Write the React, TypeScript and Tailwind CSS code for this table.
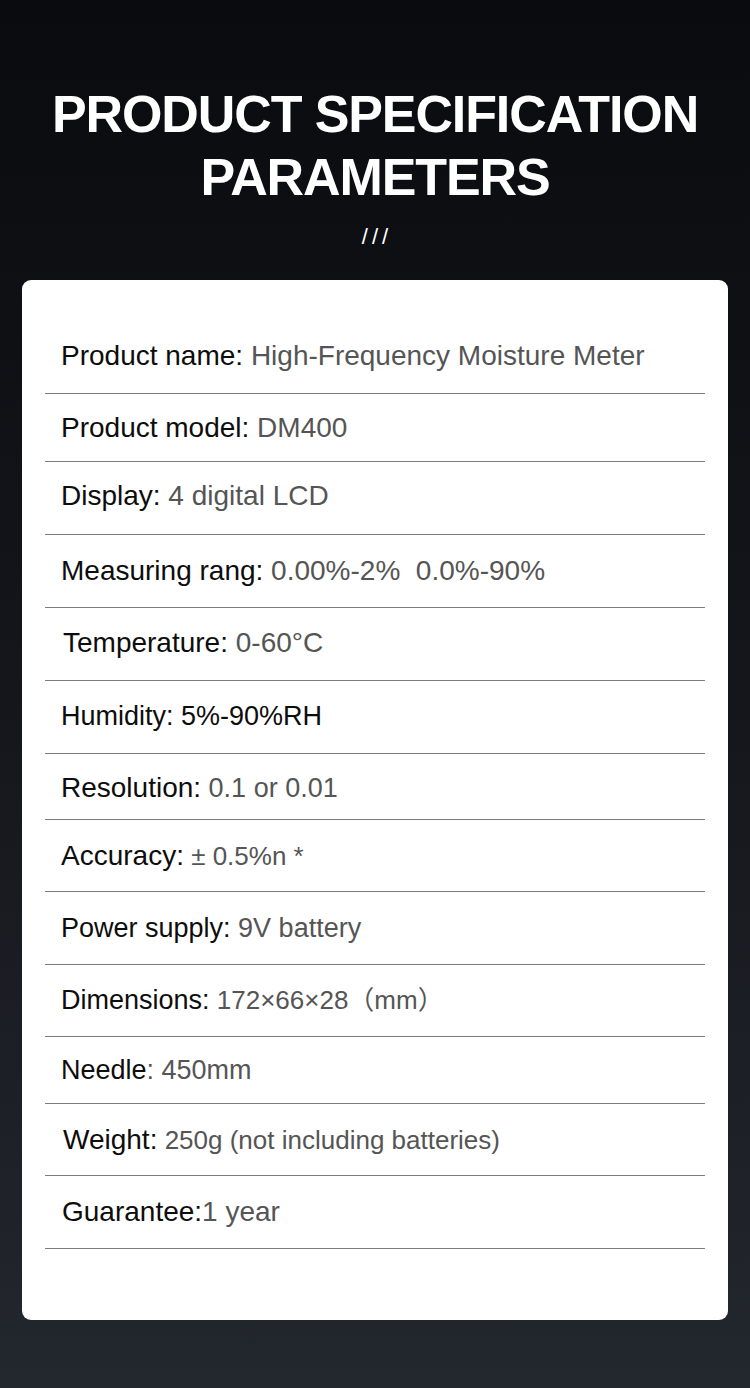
type Spec = {
  label: string;
  value: string;
  h: string;
  pl: string;
  ls: string;
  vs: string;
  dark?: boolean;
  shift?: string;
};

const specs: Spec[] = [
  { label: "Product name:", value: " High-Frequency Moisture Meter", h: "h-[76px]", pl: "pl-[16px]", ls: "text-[28px]", vs: "text-[28px]" },
  { label: "Product model:", value: " DM400", h: "h-[68px]", pl: "pl-[16px]", ls: "text-[28px]", vs: "text-[28px]" },
  { label: "Display:", value: " 4 digital LCD", h: "h-[73px]", pl: "pl-[16px]", ls: "text-[28px]", vs: "text-[28px]", shift: "-translate-y-[2px]" },
  { label: "Measuring rang:", value: " 0.00%-2%\u00a0 0.0%-90%", h: "h-[73px]", pl: "pl-[16px]", ls: "text-[28px]", vs: "text-[28px]" },
  { label: "Temperature:", value: " 0-60°C", h: "h-[73px]", pl: "pl-[18px]", ls: "text-[28px]", vs: "text-[28px]", shift: "-translate-y-[1px]" },
  { label: "Humidity:", value: " 5%-90%RH", h: "h-[73px]", pl: "pl-[16px]", ls: "text-[27px]", vs: "text-[27px]", dark: true, shift: "-translate-y-[1px]" },
  { label: "Resolution:", value: " 0.1 or 0.01", h: "h-[66px]", pl: "pl-[16px]", ls: "text-[28px]", vs: "text-[27px]", shift: "translate-y-[1px]" },
  { label: "Accuracy:", value: " ± 0.5%n *", h: "h-[72px]", pl: "pl-[16px]", ls: "text-[28px]", vs: "text-[26px]" },
  { label: "Power supply:", value: " 9V battery", h: "h-[73px]", pl: "pl-[16px]", ls: "text-[27px]", vs: "text-[27px]" },
  { label: "Dimensions:", value: " 172×66×28（mm）", h: "h-[72px]", pl: "pl-[16px]", ls: "text-[27px]", vs: "text-[26px]" },
  { label: "Needle", value: ": 450mm", h: "h-[67px]", pl: "pl-[16px]", ls: "text-[27px]", vs: "text-[27px]" },
  { label: "Weight:", value: " 250g (not including batteries)", h: "h-[72px]", pl: "pl-[18px]", ls: "text-[28px]", vs: "text-[26px]" },
  { label: "Guarantee:", value: "1 year", h: "h-[73px]", pl: "pl-[17px]", ls: "text-[28px]", vs: "text-[28px]" },
];

export default function App() {
  return (
    <div
      className="w-[750px] h-[1388px] bg-gradient-to-b from-[#0a0b0f] via-[#14161b] to-[#23272e] flex flex-col items-center overflow-hidden"
      style={{ fontFamily: '"Liberation Sans", Arial, "Noto Sans CJK SC", sans-serif' }}
    >
      {/* Title */}
      <h1 className="mt-[83px] text-center text-white font-bold text-[52px] leading-[63px] tracking-[-1.1px]">
        PRODUCT SPECIFICATION
        <br />
        PARAMETERS
      </h1>
      <div className="mt-[15px] ml-[4px] text-white text-[22px] leading-[26px] tracking-[4px] font-light">///</div>

      {/* Spec card */}
      <div className="mt-[30px] w-[706px] bg-white rounded-[9px] pt-[38px] pb-[71px] px-[23px]">
        {specs.map((s) => (
          <div key={s.label} className={`${s.h} ${s.pl} flex items-center border-b border-[#7d7d7d]`}>
            <p className={`leading-none whitespace-pre ${s.shift ?? ""}`}>
              <span className={`${s.ls} text-[#0d0d0d]`}>{s.label}</span>
              <span className={`${s.vs} ${s.dark ? "text-[#0d0d0d]" : "text-[#555555]"}`}>{s.value}</span>
            </p>
          </div>
        ))}
      </div>
    </div>
  );
}
